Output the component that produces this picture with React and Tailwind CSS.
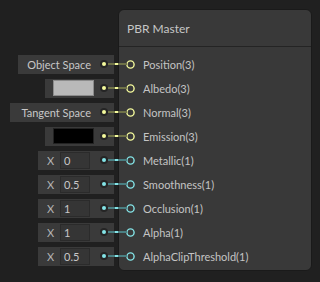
import React from "react";

const YEL = "#f4fa9c";
const YEL_DIM = "#6f7248";
const CY = "#84e4e7";
const CY_DIM = "#4a7f82";

const rows = [
  { kind: "text", text: "Object Space", w: "w-[96px]", label: "Position(3)", c: "y" },
  { kind: "swatch", color: "bg-[#b9b9b9]", border: "border-[#8c8c8c]", w: "w-[69px]", label: "Albedo(3)", c: "y" },
  { kind: "text", text: "Tangent Space", w: "w-[104px]", label: "Normal(3)", c: "y" },
  { kind: "swatch", color: "bg-[#000000]", border: "border-[#222222]", w: "w-[69px]", label: "Emission(3)", c: "y" },
  { kind: "num", v: "0", label: "Metallic(1)", c: "c" },
  { kind: "num", v: "0.5", label: "Smoothness(1)", c: "c" },
  { kind: "num", v: "1", label: "Occlusion(1)", c: "c" },
  { kind: "num", v: "1", label: "Alpha(1)", c: "c" },
  { kind: "num", v: "0.5", label: "AlphaClipThreshold(1)", c: "c" },
];

function Dot({ c, auto }) {
  return (
    <svg width="8" height="8" viewBox="0 0 8 8" className={auto ? "ml-auto shrink-0" : "shrink-0"}>
      <circle cx="4" cy="4" r="4" fill="#252525" />
      <circle cx="4" cy="4" r="2" fill={c === "y" ? YEL : CY} />
    </svg>
  );
}

function InputBox({ r }) {
  if (r.kind === "text") {
    return (
      <div className={`${r.w} h-[19px] bg-[#3a3a3a] flex items-center justify-end pr-[6px]`}>
        <span className="text-[11px] text-[#c8c8c8] leading-none">{r.text}</span>
        <span className="w-[9px] shrink-0" />
        <Dot c={r.c} />
      </div>
    );
  }
  if (r.kind === "swatch") {
    return (
      <div className={`${r.w} h-[19px] bg-[#3a3a3a] flex items-center pl-[8px] pr-[6px]`}>
        <div className={`w-[41px] h-[16px] border ${r.border} ${r.color}`} />
        <Dot c={r.c} auto />
      </div>
    );
  }
  return (
    <div className="w-[76px] h-[19px] bg-[#3a3a3a] flex items-center pl-[9px] pr-[6px]">
      <span className="text-[11px] text-[#b4b4b4] leading-none w-[13px]">X</span>
      <div className="w-[30px] h-[17px] bg-[#353535] border border-[#2b2b2b] flex items-center pl-[3px] text-[11px] text-[#c8c8c8] leading-none">
        {r.v}
      </div>
      <Dot c={r.c} auto />
    </div>
  );
}

function Port({ c }) {
  return (
    <svg width="9" height="9" viewBox="0 0 9 9" className="shrink-0">
      <circle cx="4.5" cy="4.5" r="3.6" fill="#393939" stroke={c === "y" ? YEL : CY} strokeWidth="1.4" />
    </svg>
  );
}

export default function App() {
  return (
    <div
      className="relative w-[320px] h-[282px] bg-[#202020] flex pt-[9px] overflow-hidden"
      style={{ fontFamily: 'Lato, "Liberation Sans", Arial, sans-serif' }}
    >
      <div className="w-[118px] flex flex-col items-end pt-[43px] pr-[4px]">
        {rows.map((r, i) => (
          <div key={i} className="h-[24px] flex items-center">
            <InputBox r={r} />
          </div>
        ))}
      </div>
      <div className="w-[194px] h-[262px] border border-[#1a1a1a] rounded-[6px] bg-[#393939] flex flex-col">
        <div className="h-[37px] border-b border-[#242424] flex items-center pl-[8px] pt-[1px]">
          <span className="text-[12px] text-[#c6c6c6] leading-none">PBR Master</span>
        </div>
        <div className="flex flex-col pt-[5px]">
          {rows.map((r, i) => (
            <div key={i} className="h-[24px] flex items-center pl-[7px]">
              <Port c={r.c} />
              <span className="ml-[8px] text-[11px] text-[#c4c4c4] leading-none">{r.label}</span>
            </div>
          ))}
        </div>
      </div>
      <svg className="absolute inset-0 pointer-events-none" width="320" height="282">
        {rows.map((r, i) => {
          const y = 64 + 24 * i;
          const dim = r.c === "y" ? YEL_DIM : CY_DIM;
          const br = r.c === "y" ? YEL : CY;
          return (
            <g key={i}>
              <line x1="108" y1={y} x2="127" y2={y} stroke={dim} strokeWidth="2" />
              <line x1="115" y1={y} x2="118" y2={y} stroke={br} strokeWidth="2" />
            </g>
          );
        })}
      </svg>
    </div>
  );
}
